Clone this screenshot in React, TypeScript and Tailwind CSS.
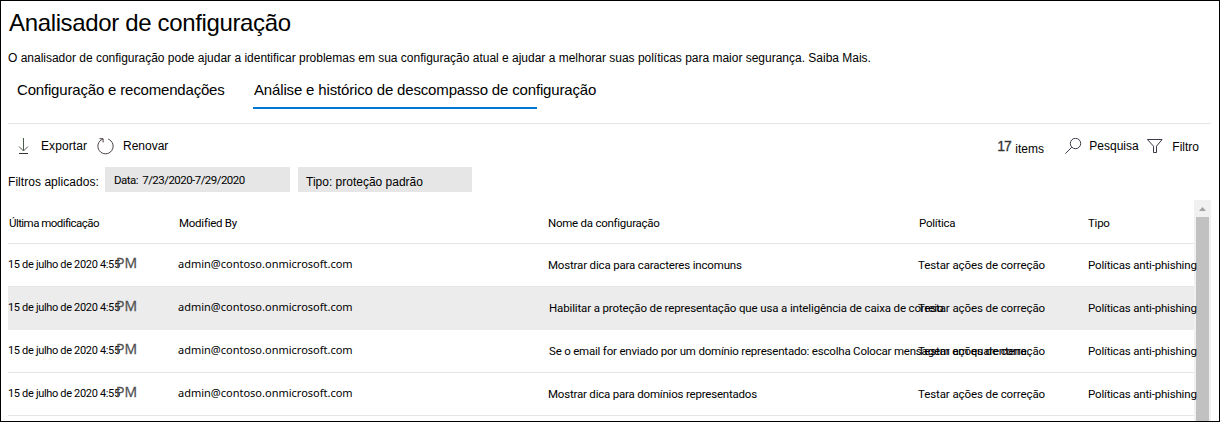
const rows = [
  { name: "Mostrar dica para caracteres incomuns", nameClass: "tracking-[-0.17px]" },
  { name: "Habilitar a proteção de representação que usa a inteligência de caixa de correio", nameClass: "pl-px tracking-[-0.14px]", selected: true },
  { name: "Se o email for enviado por um domínio representado: escolha Colocar mensagem em quarentena.", nameClass: "pl-px tracking-[-0.2px]" },
  { name: "Mostrar dica para domínios representados", nameClass: "tracking-[-0.2px]" },
];

function DownloadIcon() {
  return (
    <svg className="block shrink-0" width="11" height="17" viewBox="0 0 11 17" fill="none" stroke="#4b5b4b">
      <path d="M5.5 0V12.5M1 8.5L5.5 13L10 8.5" />
      <path d="M1 15.5H10" stroke="#333" />
    </svg>
  );
}

function RefreshIcon() {
  return (
    <svg className="block shrink-0" width="17" height="17" viewBox="0 0 17 17" fill="none" stroke="#4a4040">
      <path d="M11.2 1.1A7.6 7.6 0 1 1 5.8 1.1" />
      <path d="M2.5 0.7H6.1V4.4" />
    </svg>
  );
}

function SearchIcon() {
  return (
    <svg className="block shrink-0" width="17" height="17" viewBox="0 0 17 17" fill="none" stroke="#3b3a48">
      <circle cx="10.5" cy="5.5" r="5.2" />
      <path d="M6.8 9.2L0.4 15.6" />
    </svg>
  );
}

function FilterIcon() {
  return (
    <svg className="block shrink-0" width="17" height="16" viewBox="0 0 17 16" fill="none" stroke="#3b3a48">
      <path d="M1.4 1.5H16.1L10.5 8.2V14.5H7.5V8.2Z" />
    </svg>
  );
}

export default function App() {
  return (
    <div className="flex h-[422px] w-[1220px] flex-col overflow-hidden border border-black bg-white pl-[7px] pr-2 font-['Liberation_Sans',sans-serif] text-[12px] leading-4 whitespace-nowrap text-black">
      <h1 className="mt-2 h-7 pl-px text-[24px] leading-7 tracking-[-0.35px]">Analisador de configuração</h1>
      <p className="mt-[13px] h-4 tracking-[-0.01px]">
        O analisador de configuração pode ajudar a identificar problemas em sua configuração atual e ajudar a melhorar suas políticas para maior segurança. Saiba Mais.
      </p>
      <nav className="mt-3.5 flex h-[29px] pl-[9px] text-[15px] leading-5">
        <div className="w-[236px] tracking-[-0.18px]">Configuração e recomendações</div>
        <div className="w-[284px] border-b-2 border-[#0078d4] pl-px tracking-[-0.16px]">Análise e histórico de descompasso de configuração</div>
      </nav>
      <div className="mt-3.5 h-px shrink-0 bg-[#e5e5e5]" />

      <div className="flex h-[43px] shrink-0 items-start pl-2.5 pt-3.5">
        <DownloadIcon />
        <span className="ml-3 w-[56px] tracking-[0.1px]">Exportar</span>
        <RefreshIcon />
        <span className="ml-[9px]">Renovar</span>
        <div className="ml-auto flex items-start pr-3">
          <span className="w-[18px] text-[14px] tracking-[-1px] text-[#333] [-webkit-text-stroke:0.3px_#333]">17</span>
          <span className="mt-[3px] w-[50px]">items</span>
          <SearchIcon />
          <span className="ml-[7px] w-[57px]">Pesquisa</span>
          <FilterIcon />
          <span className="ml-[9px] mt-px">Filtro</span>
        </div>
      </div>

      <div className="flex h-[25px] shrink-0">
        <span className="w-[97px] pt-[7px] tracking-[0.05px]">Filtros aplicados:</span>
        <span className="w-[185px] bg-[#e6e6e6] pl-[9px] pt-[5px] font-['Roboto',sans-serif] text-[11.5px] tracking-[-0.54px] [word-spacing:2px]">Data: 7/23/2020-7/29/2020</span>
        <span className="ml-2 w-[174px] bg-[#e6e6e6] pl-2 pt-[7px]">Tipo: proteção padrão</span>
      </div>

      <div className="mt-2 flex h-[221px] shrink-0 font-['Roboto',sans-serif] text-[11.5px]">
        <div className="w-[1186px] shrink-0">
          <div className="flex h-11 border-b border-[#e5e5e5] pt-[15px] tracking-[-0.25px]">
            <span className="w-[171px] pl-px tracking-[-0.55px]">Última modificação</span>
            <span className="w-[369px]">Modified By</span>
            <span className="w-[371px]">Nome da configuração</span>
            <span className="w-[169px]">Política</span>
            <span>Tipo</span>
          </div>
          {rows.map((row) => (
            <div
              key={row.name}
              className={`relative z-10 flex h-[43px] border-b pt-[13px] ${row.selected ? "border-[#ececec] bg-[#ececec]" : "border-[#e5e5e5]"}`}
            >
              <span className="flex w-[170px] shrink-0">
                <span className="w-[108px] shrink-0 text-[11px] tracking-[-0.33px]">15 de julho de 2020 4:55</span>
                <span className="-mt-[2px] font-['Open_Sans',sans-serif] text-[14px] text-[#505050] [-webkit-text-stroke:0.3px_#505050]">PM</span>
              </span>
              <span className="-mt-px w-[370px] shrink-0 font-['Noto_Sans',sans-serif] text-[11px]">admin@contoso.onmicrosoft.com</span>
              <span className={`w-[370px] shrink-0 ${row.nameClass}`}>{row.name}</span>
              <span className="w-[170px] shrink-0 tracking-[-0.1px]">Testar ações de correção</span>
              <span className="shrink-0 tracking-[-0.18px]">Políticas anti-phishing</span>
            </div>
          ))}
        </div>
        <div className="flex w-[17px] shrink-0 flex-col items-center bg-[#f1f1f1]">
          <svg className="block shrink-0" width="17" height="17" viewBox="0 0 17 17" fill="#a3a3a3">
            <path d="M5 11L8.5 7L12 11Z" />
          </svg>
          <div className="w-[13px] grow bg-[#c1c1c1]" />
        </div>
      </div>
    </div>
  );
}
